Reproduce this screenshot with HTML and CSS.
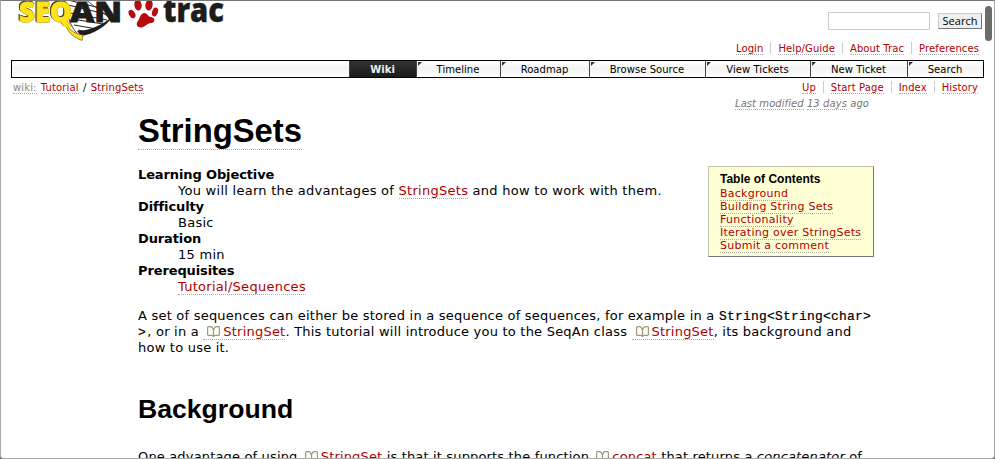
FILE: index.html
```html
<!DOCTYPE html>
<html lang="en">
<head>
<meta charset="utf-8">
<title>StringSets</title>
<link rel="stylesheet" href="styles.css">
</head>
<body>
<svg width="0" height="0" class="defs"><symbol id="book" viewBox="0 0 13 11"><path d="M6.500 4C6 2 5 .6 3.500 .6H1.500Q.6 .6 .6 1.500V8.500Q.6 9.300 1.500 9.300H5L6.500 10.400L8 9.300H11.500Q12.400 9.300 12.400 8.500V1.500Q12.400 .6 11.500 .6H9.500C8 .6 7 2 6.500 4zM6.500 4V10" fill="#fdfdf8" stroke="#999980" stroke-width="1.200"/></symbol></svg>
<div class="window">
  <header class="banner">
    <svg class="logo" width="230" height="44" viewBox="0 0 230 44">
      <g fill="none" stroke="#222" stroke-width="1">
        <path d="M68 0L108 10M68 5L110 15M70 13L107 20M72 19L103 24M74 25L97 29M78 30L91 33"/>
        <path d="M67 7Q67 23 79 36M86 0L110 18" stroke-width=".8"/>
      </g>
      <path d="M77 31C88 31 103 25 113 16C107 26 94 34 81 36z" fill="#1d1d1b"/>
      <path d="M64 17C67 28 73 34 83 35L82 40.500C70 36 65 29 64 17z" fill="#ffe21a" stroke="#4d4522" stroke-width=".6"/>
      <text class="seq" x="19" y="22" textLength="53" lengthAdjust="spacingAndGlyphs">SEQ</text>
      <text class="an" x="70" y="22" textLength="52" lengthAdjust="spacingAndGlyphs">AN</text>
      <g fill="#b70b12"><path d="M144 13C148 13 148 17 151 17C156 18 155 23 151 23C147 23 146 27 141 27.500C136 27.500 136 23 138 21C140 18 140 14 144 13z"/><ellipse cx="138" cy="5" rx="3.600" ry="5.500" transform="rotate(-8 138 5)"/><ellipse cx="149" cy="5" rx="3.600" ry="5.500" transform="rotate(8 149 5)"/><ellipse cx="132" cy="14" rx="3" ry="4.500" transform="rotate(-30 132 14)"/><ellipse cx="155" cy="12" rx="2.800" ry="4.500" transform="rotate(20 155 12)"/></g>
      <text class="trac" x="163" y="21.500" textLength="61" lengthAdjust="spacingAndGlyphs">trac</text>
    </svg>
    <form class="search"><input type="text" aria-label="Search"><button type="button">Search</button></form>
  </header>
  <nav class="links meta"><a>Login</a><a>Help/Guide</a><a>About Trac</a><a>Preferences</a></nav>
  <nav class="mainnav"><a class="active">Wiki</a><a>Timeline</a><a>Roadmap</a><a>Browse Source</a><a>View Tickets</a><a>New Ticket</a><a>Search</a></nav>
  <div class="ctx">
    <div class="path"><a class="first">wiki:</a> <a>Tutorial</a> / <a>StringSets</a></div>
    <nav class="links"><a>Up</a><a>Start Page</a><a>Index</a><a>History</a></nav>
  </div>
  <main>
    <div class="modified"><a>Last modified</a> <a>13 days</a> ago</div>
    <h1><span>StringSets</span></h1>
    <div class="intro">
      <dl>
        <dt>Learning Objective</dt><dd>You will learn the advantages of <a>StringSets</a> and how to work with them.</dd>
        <dt>Difficulty</dt><dd>Basic</dd>
        <dt>Duration</dt><dd>15 min</dd>
        <dt>Prerequisites</dt><dd><a>Tutorial/Sequences</a></dd>
      </dl>
      <aside class="toc"><h4>Table of Contents</h4><ul><li><a>Background</a></li><li><a>Building String Sets</a></li><li><a>Functionality</a></li><li><a>Iterating over StringSets</a></li><li><a>Submit a comment</a></li></ul></aside>
    </div>
    <p>A set of sequences can either be stored in a sequence of sequences, for example in a <code>String&lt;String&lt;char&gt;</code><br><code class="tail">&gt;</code>, or in a <a class="ext"><svg><use href="#book"/></svg>StringSet</a>. This tutorial will introduce you to the SeqAn class <a class="ext"><svg><use href="#book"/></svg>StringSet</a>, its background and<br>how to use it.</p>
    <h2>Background</h2>
    <p class="tight">One advantage of using <a class="ext"><svg><use href="#book"/></svg>StringSet</a> is that it supports the function <a class="ext"><svg><use href="#book"/></svg>concat</a> that returns a <em>concatenator</em> of</p>
  </main>
  <div class="thumb"></div>
</div>
</body>
</html>
```
FILE: styles.css
```css
* { box-sizing: border-box; }
html, body { margin: 0; height: 100%; overflow: hidden; }
body { background: #777; color: #000; font: 13px/16px "DejaVu Sans", Verdana, sans-serif; white-space: nowrap; }
a { color: #b00000; border-bottom: 1px dotted #aaa; }
.defs { position: absolute; }
.window { position: relative; height: 459px; overflow: hidden; background: #fff; border: 1px solid #aaa; border-top-color: #777; border-radius: 0 0 4px 4px; padding: 0 10px; }
.banner { display: flex; justify-content: space-between; height: 41px; margin-left: -11px; }
.logo { flex: none; margin-top: -1px; }
.logo text { font-family: "Open Sans", sans-serif; font-weight: 800; }
.seq { font-size: 28px; fill: #ffe21a; stroke: #ffe21a; stroke-width: .9px; filter: drop-shadow(.5px .5px 0 #4d4522) drop-shadow(-.5px -.5px 0 #4d4522); }
.an { font-size: 29px; fill: #1d1d1b; stroke: #1d1d1b; stroke-width: .8px; }
.trac { font-size: 34px; fill: #1d1d1b; stroke: #1d1d1b; stroke-width: .4px; }
.search { display: flex; gap: 8px; margin: 11px 2px 0 0; }
.search input { width: 102px; height: 18px; padding: 0; border: 1px solid #ccc; }
.search button { width: 44px; height: 16px; margin-top: 1px; padding: 0; border: 1px solid; border-color: #ccc #777 #777 #ccc; background: #eee; color: #000; font: 11px/12px "Open Sans", sans-serif; }
.links { display: flex; align-items: flex-start; justify-content: flex-end; font-size: 10px; line-height: 14px; padding-right: 6px; letter-spacing: .1px; }
.links a { position: relative; height: 13px; margin-left: 15px; }
.links a + a::before { content: ""; position: absolute; left: -8px; top: 0; height: 12px; border-left: 1px solid #ccc; }
.meta { height: 18px; padding-right: 5px; }
.mainnav { display: flex; justify-content: flex-end; width: 973px; height: 18px; border: 1px solid #000; background: linear-gradient(#fff, #f3f3f3 50%, #fff); font-size: 10px; line-height: 17px; letter-spacing: .05px; }
.mainnav a { position: relative; color: #000; border: 0; border-left: 1px solid #444; text-align: center; padding-right: 1px; }
.mainnav a::before { content: ""; position: absolute; left: 1px; top: 1px; border: 2px solid #333; border-right-color: transparent; border-bottom-color: transparent; }
.mainnav .active { background: linear-gradient(#333, #1b1b18); color: #eee; font-weight: bold; }
.mainnav .active::before { display: none; }
.mainnav a:nth-child(1) { width: 67px; }
.mainnav a:nth-child(2) { width: 84px; }
.mainnav a:nth-child(3) { width: 89px; }
.mainnav a:nth-child(4) { width: 116px; }
.mainnav a:nth-child(5) { width: 105px; }
.mainnav a:nth-child(6) { width: 97px; }
.mainnav a:nth-child(7) { width: 76px; }
.ctx { display: flex; justify-content: space-between; height: 18px; padding-top: 3px; font-size: 10px; line-height: 14px; }
.path { padding-left: 2px; letter-spacing: .13px; word-spacing: 1px; }
.path .first { color: #887; }
main { width: 736px; margin-left: 127px; }
.modified { text-align: right; padding-right: 5px; height: 18px; font-size: 10px; line-height: 16px; letter-spacing: .07px; font-style: italic; color: #777; }
.modified a { color: #777; }
h1, h2, h4 { font-family: "Liberation Sans", Arial, sans-serif; }
h1 { margin: 0; height: 52px; font-size: 32.8px; line-height: 33px; }
h1 span { border-bottom: 1px dotted #aaa; }
.intro { display: flex; justify-content: space-between; }
dl { margin: 0; padding-top: 1px; }
dt { font-weight: bold; letter-spacing: -.12px; }
dd { margin-left: 40px; letter-spacing: .27px; }
.toc { width: 166px; height: 91px; background: #ffffd5; border: 1px solid #c5c5ac; border-right-color: #777; border-bottom-color: #777; padding: 6px 11px; font-size: 11px; line-height: 13px; }
.toc h4 { margin: 0; font-size: 12px; line-height: 13px; height: 14px; }
.toc ul { list-style: none; margin: 0; padding: 0; letter-spacing: .25px; }
p { margin: 13px 0; letter-spacing: .22px; }
.tight { letter-spacing: .16px; }
code { font: 13px/1 "Liberation Mono", monospace; -webkit-text-stroke: .2px #000; letter-spacing: .2px; }
.tail { letter-spacing: 1.5px; }
.ext svg { width: 13px; height: 11px; margin: 0 3px -1px 3px; }
p:not(.tight) .ext svg { margin-left: 4px; }
h2 { margin: 37px 0 0; height: 43px; font-size: 26.6px; line-height: 32px; }
.thumb { position: absolute; right: 2px; top: 5px; width: 7px; height: 35px; border-radius: 4px; background: #6b6b6b; }
```
